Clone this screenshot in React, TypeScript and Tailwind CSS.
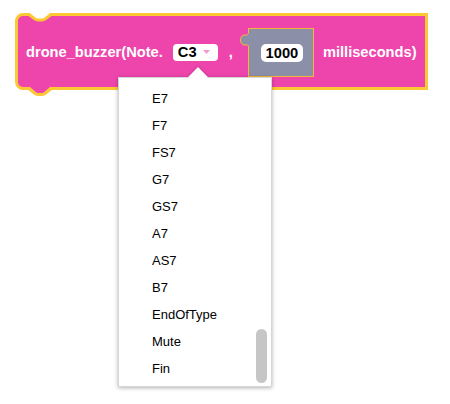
import React from "react";

const NOTES = ["E7", "F7", "FS7", "G7", "GS7", "A7", "AS7", "B7", "EndOfType", "Mute", "Fin"];

function BlockOutline() {
  // notch on top and tab below, drawn over the block border
  return (
    <svg
      className="absolute left-[-3px] top-[-3px] overflow-visible pointer-events-none"
      width={413}
      height={77}
    >
      <path d="M15,-1 L15,1.5 L20,6 Q21,7 23,7 L27,7 Q29,7 30,6 L35,1.5 L35,-1 Z" fill="#ffffff" />
      <path
        d="M14,1.5 L20,6 Q21,7 23,7 L27,7 Q29,7 30,6 L36,1.5"
        fill="none"
        stroke="#fcc934"
        strokeWidth={3}
        strokeLinejoin="round"
      />
      <path d="M15,74 L20,79 Q21,80 23,80 L27,80 Q29,80 30,79 L35,74 Z" fill="#ee45ad" />
      <path
        d="M14,75.5 L20,80.5 Q21,81.5 23,81.5 L27,81.5 Q29,81.5 30,80.5 L36,75.5"
        fill="none"
        stroke="#fcc934"
        strokeWidth={3}
        strokeLinejoin="round"
      />
    </svg>
  );
}

function NumberInput({ value }: { value: string }) {
  return (
    <div className="relative ml-[15px] mt-[2px] w-[66px] h-[49px] bg-[#8b8fa7] border border-[#f5b63a] flex items-center pl-[12px]">
      <svg className="absolute left-[-9px] top-[4px] overflow-visible" width={10} height={14}>
        <path d="M8.5,0 C8.5,2 7,2 5,2 C2,2 0.5,4 0.5,7 C0.5,10 2,12 5,12 C7,12 8.5,12 8.5,13" fill="#8b8fa7" stroke="#f5b63a" strokeWidth={1} />
        <rect x={8} y={0.5} width={2.5} height={12} fill="#8b8fa7" />
      </svg>
      <div className="w-[42px] h-[18px] bg-white rounded-[5px] flex items-center justify-center text-black font-bold text-[14.67px]">
        {value}
      </div>
    </div>
  );
}

export default function App() {
  return (
    <div className="relative w-[450px] h-[404px] bg-white overflow-hidden font-['Liberation_Sans',Arial,sans-serif]">
      <div className="pt-[13px] pl-[15px]">
        <div className="relative flex items-center w-[413px] h-[77px] border-[3px] border-[#fcc934] bg-[#ee45ad] rounded-l-[8px] pl-[8px] text-white font-bold text-[14.67px] whitespace-nowrap">
          <BlockOutline />
          <span>drone_buzzer(Note.</span>
          <div className="ml-[10px] mt-[1px] w-[45px] h-[17px] bg-white rounded-[4px] flex items-center pl-[5px] text-black">
            <span>C3</span>
            <svg className="ml-auto mr-[8px]" width={7} height={5}>
              <path d="M0,0 L7,0 L3.5,4 Z" fill="#f39bcd" />
            </svg>
          </div>
          <span className="ml-[11px]">,</span>
          <NumberInput value="1000" />
          <span className="ml-[9px]">milliseconds)</span>
        </div>
      </div>

      <div className="absolute left-[118px] top-[77px] w-[154px] h-[310px] bg-white border border-[#d6d6d6] shadow-[0_1px_4px_rgba(0,0,0,0.3)]">
        <div className="pt-[7px] pl-[33px]">
          {NOTES.map(n => (
            <div key={n} className="h-[27px] flex items-center text-[13px] text-black">
              {n}
            </div>
          ))}
        </div>
        <div className="absolute right-[4px] top-[251px] w-[11px] h-[54px] rounded-full bg-[#c6c6c6]" />
      </div>
      <div className="absolute left-[191px] top-[70px] w-[14px] h-[14px] bg-white rotate-45 shadow-[-1px_-1px_2px_rgba(0,0,0,0.15)]" />
    </div>
  );
}
